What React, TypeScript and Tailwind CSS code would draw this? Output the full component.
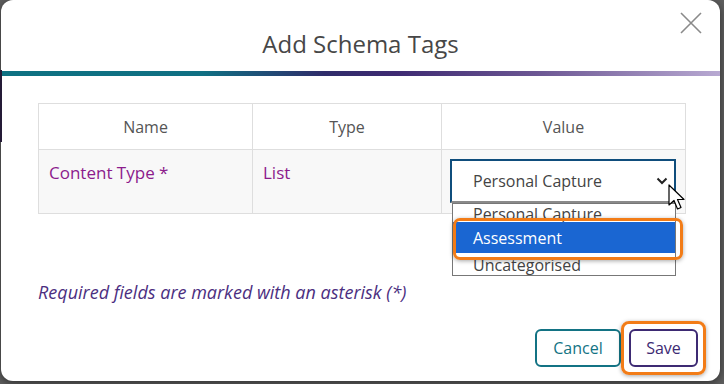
import React from 'react';

const font = "font-['Open_Sans','Noto_Sans',sans-serif]";

const Cursor: React.FC = () => (
  <svg width="20" height="28" viewBox="0 0 20 28" className="absolute left-[668px] top-[184px]">
    <path d="M1 1 L1 21 L6 16.5 L9.5 25 L13 23.5 L9.5 15.5 L16 15.5 Z" fill="#fff" stroke="#000" strokeWidth="1.2" strokeLinejoin="round" />
  </svg>
);

export default function App() {
  return (
    <div className={`relative w-[724px] h-[384px] overflow-hidden bg-[#5e5e5e] ${font}`}>
      <div className="absolute left-0 top-[70px] w-[2px] h-[72px] bg-[#241a36]" />
      <div className="ml-[1px] w-[719px] h-[381px] bg-white rounded-[12px] shadow-[0_2px_8px_rgba(0,0,0,0.5)] flex flex-col">
        <div className="relative h-[71px] flex items-end justify-center pb-[11px]">
          <h1 className="text-[24px] leading-[32px] text-[#474747]">Add Schema Tags</h1>
          <button className="absolute right-[18px] top-[12px] w-[22px] h-[22px]">
            <svg viewBox="0 0 22 22" width="22" height="22">
              <path d="M1 1 L21 21 M21 1 L1 21" stroke="#8a8a8a" strokeWidth="1.6" />
            </svg>
          </button>
        </div>
        <div className="h-[5px] bg-[linear-gradient(90deg,#0e7182_0%,#107083_28%,#2f2c6a_45%,#3e2a72_55%,#6d5894_75%,#b8a9d2_100%)]" />

        <div className="relative pl-[37px] pt-[27px]">
          <table className="w-[647px] border-collapse text-[16px] table-fixed">
            <colgroup>
              <col className="w-[214px]" />
              <col className="w-[189px]" />
              <col className="w-[244px]" />
            </colgroup>
            <thead>
              <tr className="h-[46px] bg-white">
                <th className="border border-[#dedede] font-normal text-[#555]">Name</th>
                <th className="border border-[#dedede] font-normal text-[#555]">Type</th>
                <th className="border border-[#dedede] font-normal text-[#555]">Value</th>
              </tr>
            </thead>
            <tbody>
              <tr className="h-[64px] bg-[#f8f8f8]">
                <td className="border border-[#dedede] align-top pl-[10px] pt-[11px] text-[17px] text-[#8c1b8c] leading-[24px]">Content Type *</td>
                <td className="border border-[#dedede] align-top pl-[10px] pt-[11px] text-[17px] text-[#8c1b8c] leading-[24px]">List</td>
                <td className="border border-[#dedede] align-top pl-[8px] pt-[9px]">
                  <div className="w-[226px] h-[44px] bg-white border-2 border-[#0f4d7c] border-b-[#8a8a8a] flex items-center justify-between pl-[21px] pr-[6px] text-[16px] text-[#444]">
                    <span>Personal Capture</span>
                    <svg width="12" height="8" viewBox="0 0 12 8">
                      <path d="M1.5 1.5 L6 6 L10.5 1.5" stroke="#222" strokeWidth="2" fill="none" />
                    </svg>
                  </div>
                </td>
              </tr>
            </tbody>
          </table>

          <div className="absolute left-[451px] top-[127px] w-[224px] h-[73px] bg-white border border-[#777] overflow-hidden text-[16px] flex flex-col">
            <div className="h-[18px] leading-[20px] pl-[20px] text-[#444]">Personal Capture</div>
            <div className="h-[31px] leading-[33px] pl-[20px] bg-[#1a66d2] text-white">Assessment</div>
            <div className="h-[23px] leading-[24px] pl-[20px] text-[#444]">Uncategorised</div>
          </div>
          <div className="absolute left-[452px] top-[142px] w-[230px] h-[42px] border-[3px] border-[#f27c17] rounded-[7px] shadow-[0_1px_4px_rgba(0,0,0,0.35)]" />
        </div>

        <p className="pl-[37px] mt-[66px] italic text-[18px] leading-[24px] text-[#4b2e80]">
          Required fields are marked with an asterisk (*)
        </p>

        <div className="mt-[25px] flex justify-end items-center pr-[22px] gap-[8px]">
          <button className="w-[86px] h-[38px] border-2 border-[#137384] rounded-[6px] text-[#137384] text-[16px] font-medium">Cancel</button>
          <div className="relative">
            <button className="w-[69px] h-[38px] border-2 border-[#3d2a73] rounded-[6px] text-[#3d2a73] text-[16px] font-medium">Save</button>
            <div className="absolute -left-[8px] -top-[8px] w-[85px] h-[54px] border-[3px] border-[#f27c17] rounded-[8px] shadow-[0_1px_4px_rgba(0,0,0,0.35)]" />
          </div>
        </div>
      </div>
      <Cursor />
    </div>
  );
}
